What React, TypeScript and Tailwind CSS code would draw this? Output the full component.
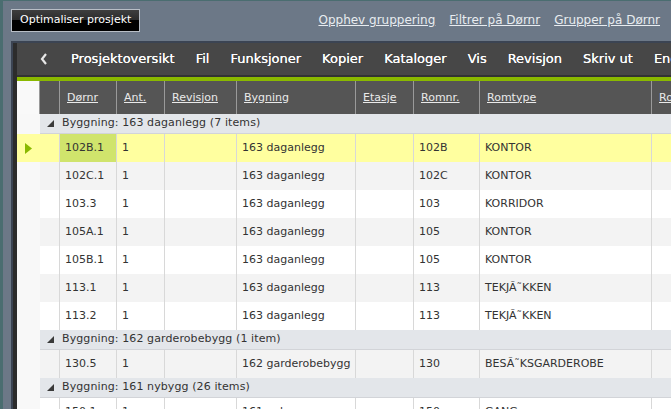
import React from "react";

const cols = [
  { key: "ind", w: 23 },
  { key: "indent", w: 19 },
  { key: "dornr", w: 57, label: "Dørnr" },
  { key: "ant", w: 48, label: "Ant." },
  { key: "rev", w: 72, label: "Revisjon" },
  { key: "byg", w: 119, label: "Bygning" },
  { key: "etasje", w: 58, label: "Etasje" },
  { key: "romnr", w: 66, label: "Romnr." },
  { key: "romtype", w: 172, label: "Romtype" },
  { key: "ro", w: 60, label: "Romnavn" },
];

type Row = { d: string; a: string; b: string; r: string; t: string };
type Group = { title: string; rows: Row[] };

const groups: Group[] = [
  {
    title: "Byggning: 163 daganlegg (7 items)",
    rows: [
      { d: "102B.1", a: "1", b: "163 daganlegg", r: "102B", t: "KONTOR" },
      { d: "102C.1", a: "1", b: "163 daganlegg", r: "102C", t: "KONTOR" },
      { d: "103.3", a: "1", b: "163 daganlegg", r: "103", t: "KORRIDOR" },
      { d: "105A.1", a: "1", b: "163 daganlegg", r: "105", t: "KONTOR" },
      { d: "105B.1", a: "1", b: "163 daganlegg", r: "105", t: "KONTOR" },
      { d: "113.1", a: "1", b: "163 daganlegg", r: "113", t: "TEKJÃ˜KKEN" },
      { d: "113.2", a: "1", b: "163 daganlegg", r: "113", t: "TEKJÃ˜KKEN" },
    ],
  },
  {
    title: "Byggning: 162 garderobebygg (1 item)",
    rows: [{ d: "130.5", a: "1", b: "162 garderobebygg", r: "130", t: "BESÃ˜KSGARDEROBE" }],
  },
  {
    title: "Byggning: 161 nybygg (26 items)",
    rows: [{ d: "150.1", a: "1", b: "161 nybygg", r: "150", t: "GANG" }],
  },
];

const menu = ["Prosjektoversikt", "Fil", "Funksjoner", "Kopier", "Kataloger", "Vis", "Revisjon", "Skriv ut", "Endre"];

function Triangle() {
  return (
    <svg width="7" height="7" viewBox="0 0 7 7" className="shrink-0">
      <polygon points="7,0 7,7 0,7" fill="#3a3a3a" />
    </svg>
  );
}

export default function App() {
  let rowIndex = 0;
  return (
    <div
      className="w-[671px] h-[409px] overflow-hidden bg-[#6c7887] border-l-[3px] border-t border-[#4a6d70] relative"
      style={{ fontFamily: '"DejaVu Sans", Verdana, sans-serif' }}
    >
      {/* top bar */}
      <div className="flex items-center h-[40px] pl-[8px]">
        <button className="h-[23px] px-[8px] border border-[#b8bec6] text-white text-[11px] bg-[linear-gradient(#3e3e3e_0%,#2a2a2a_50%,#000_50%,#000_100%)] mt-[-1px]">
          Optimaliser prosjekt
        </button>
        <div className="ml-auto mr-[11px] flex gap-[14px] text-[12px] text-[#e8ecf0] underline mt-[-3px]">
          <span>Opphev gruppering</span>
          <span>Filtrer på Dørnr</span>
          <span>Grupper på Dørnr</span>
        </div>
      </div>

      {/* panel */}
      <div className="ml-[8px] border-l-[2px] border-t-[2px] border-[#3b4453] bg-[#2c2c2c] pl-[4px] h-[400px]">
        <div className="bg-[#474747] h-[32px] flex items-center text-white text-[13px] whitespace-nowrap overflow-hidden">
          <div className="w-[54px] shrink-0 flex justify-center">
            <svg width="8" height="12" viewBox="0 0 8 12">
              <polyline points="6,1 2,6 6,11" fill="none" stroke="#e8e8e8" strokeWidth="2.2" />
            </svg>
          </div>
          <div className="flex gap-[21px] [text-shadow:0_0_0.4px_#fff]">
            {menu.map((m) => (
              <span key={m}>{m}</span>
            ))}
          </div>
        </div>
        <div className="h-[2px] bg-[#333]" />
        <div className="h-[4px] bg-[#8ab900]" />
        {/* header */}
        <div className="flex h-[33px] bg-[#555555] whitespace-nowrap">
          {cols.map((c, i) => (
            <div
              key={c.key}
              style={{ width: c.w }}
              className={`shrink-0 flex items-center text-[11px] text-[#eaeaea] ${
                i === 0 ? "bg-[#f9f9f9] border-r border-[#999]" : i === 1 ? "" : "border-l border-[#9a9a9a] pl-[7px] pt-[1px]"
              }`}
            >
              {c.label && i < 9 && <span className="underline">{c.label}</span>}
              {i === 9 && <span className="underline">Ro</span>}
            </div>
          ))}
        </div>
        {/* body */}
        <div className="text-[11px] text-[#333]">
          {groups.map((g) => (
            <div key={g.title}>
              <div className="flex h-[20px]">
                <div className="w-[23px] shrink-0 bg-[#f8f8f8]" />
                <div className="flex-1 flex items-center bg-[#e3e6ea] border-b border-[#d2d4d8] whitespace-nowrap">
                  <div className="w-[19px] flex justify-center pl-[1px]">
                    <Triangle />
                  </div>
                  <span className="pl-[3px] tracking-[0.1px]">{g.title}</span>
                </div>
              </div>
              {g.rows.map((r) => {
                const idx = rowIndex++;
                const selected = idx === 0;
                const bg = selected ? "bg-[#ffff9f]" : idx % 2 === 1 ? "bg-[#f3f3f3]" : "bg-white";
                const vals = [r.d, r.a, "", r.b, "", r.r, r.t, ""];
                return (
                  <div key={r.d} className={`flex h-[28px] whitespace-nowrap ${bg}`}>
                    <div className={`w-[23px] shrink-0 flex items-center pl-[8px] ${selected ? "" : "bg-[#f8f8f8]"}`}>
                      {selected && (
                        <svg width="7" height="11" viewBox="0 0 7 11">
                          <polygon points="0,0 7,5.5 0,11" fill="#8ab900" />
                        </svg>
                      )}
                    </div>
                    <div className="w-[19px] shrink-0" />
                    {vals.map((v, j) => (
                      <div
                        key={j}
                        style={{ width: cols[j + 2].w }}
                        className={`shrink-0 flex items-center border-l border-[#d8d8d8] pl-[5px] overflow-hidden ${
                          selected && j === 0 ? "bg-[#d0e46c]" : ""
                        }`}
                      >
                        {v}
                      </div>
                    ))}
                  </div>
                );
              })}
            </div>
          ))}
        </div>
      </div>
    </div>
  );
}
